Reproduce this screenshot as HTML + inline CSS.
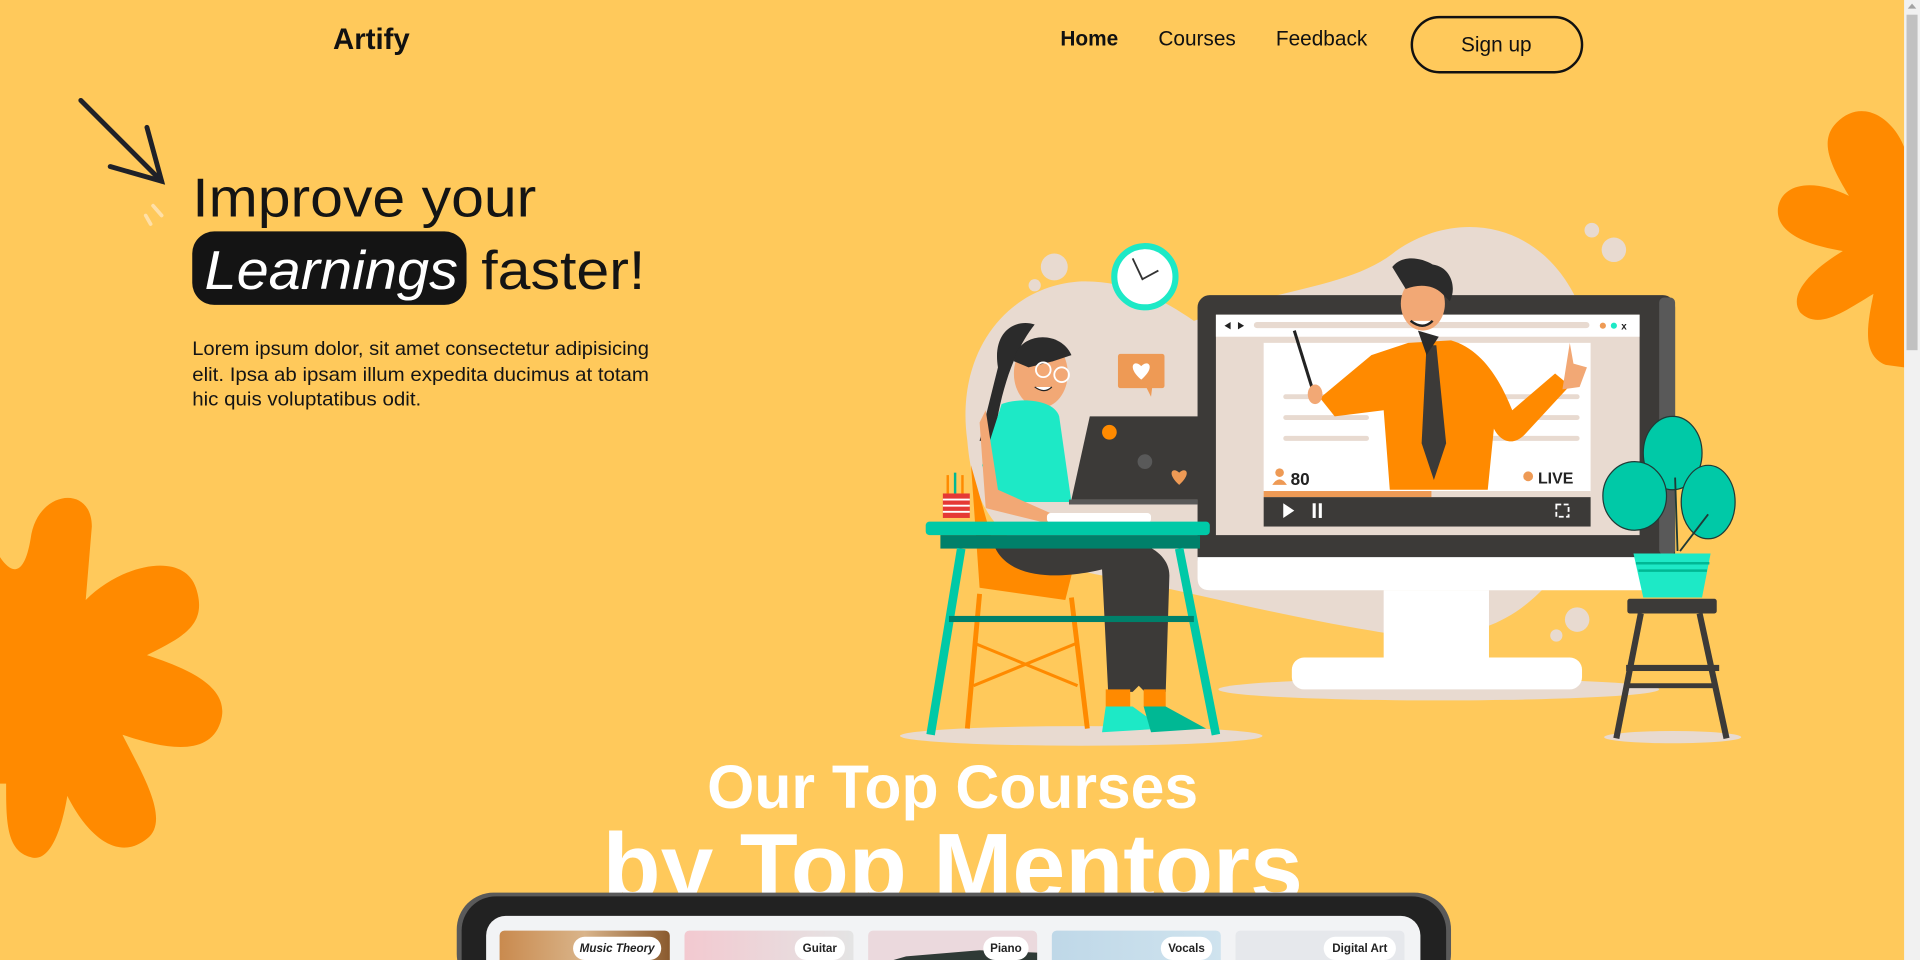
<!DOCTYPE html>
<html><head><meta charset="utf-8"><style>
html,body{margin:0;padding:0;width:1920px;height:960px;overflow:hidden;background:#FFC95B}
svg{display:block}
text{font-family:"Liberation Sans",sans-serif}
</style></head><body>
<svg width="1920" height="960" viewBox="0 0 1568 784" xmlns="http://www.w3.org/2000/svg">
<rect width="1568" height="784" fill="#FFC95B"/>
<!-- orange blobs -->
<path d="M0 455 C10 470 20 470 25 440 C30 400 75 395 75 430 L70 490 C100 460 150 450 160 480 C170 510 150 520 120 535 C150 545 190 560 180 590 C170 620 130 610 100 600 C115 630 140 670 120 685 C95 705 70 680 55 650 C50 680 40 705 25 700 C5 695 5 670 5 640 L0 640 Z" fill="#FF8A00"/>
<path d="M1555 120 C1545 95 1520 80 1500 100 C1485 115 1495 135 1510 160 C1480 145 1455 150 1452 170 C1450 190 1475 200 1505 205 C1480 220 1460 240 1470 255 C1485 270 1505 255 1530 240 C1525 265 1520 290 1540 298 L1555 300 Z" fill="#FF8A00"/>
<!-- arrow -->
<g stroke="#1F2128" stroke-width="4" fill="none" stroke-linecap="round">
<path d="M66 82 L132 148"/><path d="M120 104 L132 148 L90 136"/>
</g>
<g stroke="#FFE0A8" stroke-width="3" stroke-linecap="round"><path d="M125 168 L132 176"/><path d="M119 176 L123 183"/></g>
<!-- nav -->
<text x="272" y="40" font-size="24" font-weight="bold" fill="#111">Artify</text>
<text x="866" y="37" font-size="17" font-weight="bold" fill="#111">Home</text>
<text x="946" y="37" font-size="17" fill="#111">Courses</text>
<text x="1042" y="37" font-size="17" fill="#111">Feedback</text>
<rect x="1153" y="14" width="139" height="45" rx="22.5" fill="none" stroke="#111" stroke-width="2"/>
<text x="1222" y="42" font-size="17" fill="#111" text-anchor="middle">Sign up</text>
<!-- hero -->
<text x="157" y="177" font-size="45" fill="#141414" textLength="281" lengthAdjust="spacingAndGlyphs">Improve your</text>
<rect x="157" y="189" width="224" height="60" rx="18" fill="#141414"/>
<text x="167" y="236" font-size="45" font-style="italic" fill="#fff" textLength="207" lengthAdjust="spacingAndGlyphs">Learnings</text>
<text x="393" y="236" font-size="45" fill="#141414" textLength="134" lengthAdjust="spacingAndGlyphs">faster!</text>
<g font-size="15.5" fill="#141414"><text x="157" y="290" textLength="373" lengthAdjust="spacingAndGlyphs">Lorem ipsum dolor, sit amet consectetur adipisicing</text>
<text x="157" y="311" textLength="373" lengthAdjust="spacingAndGlyphs">elit. Ipsa ab ipsam illum expedita ducimus at totam</text>
<text x="157" y="331" textLength="187" lengthAdjust="spacingAndGlyphs">hic quis voluptatibus odit.</text></g>
<!-- illustration background -->
<path d="M790 360 C780 290 820 235 880 230 C920 228 950 245 975 262 L1010 250 C1060 235 1110 230 1140 205 C1190 170 1260 180 1290 250 C1310 300 1320 380 1290 440 C1250 510 1200 530 1120 515 C1030 500 960 480 900 470 C820 455 795 420 790 360 Z" fill="#E8DAD0"/>
<g fill="#E8DAD0"><circle cx="861" cy="218" r="11"/><circle cx="845" cy="233" r="5"/><circle cx="1300" cy="188" r="6"/><circle cx="1318" cy="204" r="10"/><circle cx="1288" cy="506" r="10"/><circle cx="1271" cy="519" r="5"/>
<ellipse cx="883" cy="601" rx="148" ry="8"/><ellipse cx="1175" cy="563" rx="180" ry="9"/><ellipse cx="1366" cy="602" rx="56" ry="5"/></g>
<!-- clock -->
<circle cx="935" cy="226" r="25" fill="#fff" stroke="#1DE9C6" stroke-width="5"/>
<path d="M925 211 L933 228 L946 221" stroke="#333" stroke-width="1.5" fill="none"/>
<!-- heart bubble -->
<rect x="913" y="289" width="38" height="28" rx="2" fill="#EE9A55"/><path d="M936 316 L940 324 L941 316Z" fill="#EE9A55"/>
<path d="M932 310 C920 300 926 293 932 299 C938 293 944 300 932 310Z" fill="#fff"/>
<!-- monitor -->
<rect x="978" y="241" width="390" height="225" rx="10" fill="#3C3A38"/>
<rect x="1355" y="243" width="13" height="210" rx="4" fill="#595959"/>
<path d="M978 455 H1368 V472 Q1368 482 1358 482 H988 Q978 482 978 472Z" fill="#fff"/>
<rect x="1130" y="482" width="86" height="56" fill="#fff"/>
<rect x="1055" y="537" width="237" height="26" rx="10" fill="#fff"/>
<rect x="993" y="257" width="346" height="180" fill="#E8DAD0"/>
<rect x="993" y="257" width="346" height="18" fill="#fff"/>
<rect x="1024" y="263" width="274" height="5" rx="2.5" fill="#E8DAD0"/>
<path d="M1000 266 l5 -3 v6z M1016 266 l-5 -3 v6z" fill="#222"/>
<circle cx="1309" cy="266" r="2.5" fill="#EE9A55"/><circle cx="1318" cy="266" r="2.5" fill="#1DE9C6"/>
<text x="1324" y="269" font-size="8" font-weight="bold" fill="#222">x</text>
<rect x="1032" y="280" width="267" height="123" fill="#fff"/>
<g fill="#E8DAD0"><rect x="1048" y="322" width="70" height="4" rx="2"/><rect x="1048" y="339" width="70" height="4" rx="2"/><rect x="1048" y="356" width="70" height="4" rx="2"/><rect x="1215" y="322" width="75" height="4" rx="2"/><rect x="1215" y="339" width="75" height="4" rx="2"/><rect x="1215" y="356" width="75" height="4" rx="2"/></g>
<rect x="1032" y="401" width="267" height="5" fill="#E8DAD0"/><rect x="1032" y="401" width="137" height="5" fill="#EE9A55"/>
<rect x="1032" y="406" width="267" height="24" fill="#3C3A38"/>
<path d="M1048 411 l9 6 l-9 6z" fill="#fff"/><rect x="1072" y="411" width="2.5" height="12" fill="#fff"/><rect x="1077" y="411" width="2.5" height="12" fill="#fff"/>
<rect x="1271" y="412" width="10" height="10" fill="none" stroke="#fff" stroke-width="1.5" stroke-dasharray="4 2"/>
<circle cx="1045" cy="386" r="3.5" fill="#EE9A55"/><path d="M1039 396 q6 -9 12 0z" fill="#EE9A55"/>
<text x="1054" y="396" font-size="14" font-weight="bold" fill="#222">80</text>
<circle cx="1248" cy="389" r="4" fill="#EE9A55"/>
<text x="1256" y="395" font-size="13" font-weight="bold" fill="#222">LIVE</text>
<!-- teacher -->
<path d="M1150 280 L1185 278 C1210 285 1225 310 1235 335 L1270 305 L1282 315 L1245 355 C1235 365 1225 360 1220 350 L1215 400 L1135 400 L1130 335 L1090 340 L1078 325 L1120 290Z" fill="#FF8A00"/>
<path d="M1165 282 l8 0 l8 80 l-10 30 l-10 -30z" fill="#3C3A38"/>
<path d="M1057 270 L1075 328" stroke="#222" stroke-width="2.5"/>
<ellipse cx="1074" cy="322" rx="6" ry="8" fill="#F2A875"/>
<path d="M1282 280 L1285 297 L1296 300 L1290 316 L1276 318 Z" fill="#F2A875"/>
<ellipse cx="1162" cy="248" rx="18" ry="22" fill="#F2A875"/>
<path d="M1137 218 C1145 208 1160 210 1170 216 C1185 218 1190 235 1184 246 L1178 240 C1170 232 1158 232 1148 236 Z" fill="#2B2B2B"/>
<path d="M1152 262 q10 8 18 0" stroke="#222" stroke-width="2" fill="#fff"/>
<path d="M1158 270 L1175 275 L1165 290Z" fill="#2B2B2B"/>
<!-- woman -->
<path d="M815 300 C810 270 830 260 845 265 C825 290 815 330 812 360 L800 360Z" fill="#2B2B2B"/>
<ellipse cx="850" cy="305" rx="22" ry="28" fill="#F2A875"/>
<path d="M828 295 C830 272 865 268 875 290 L860 295 L840 300Z" fill="#2B2B2B"/>
<circle cx="852" cy="302" r="6" fill="none" stroke="#fff" stroke-width="1.5"/><circle cx="867" cy="306" r="6" fill="none" stroke="#fff" stroke-width="1.5"/>
<path d="M845 316 q8 6 14 0" fill="#fff" stroke="#222" stroke-width="1"/>
<path d="M818 330 C830 325 860 325 865 340 L875 410 L815 410 L802 380 Z" fill="#1DE9C6"/>
<path d="M805 335 L815 400 L860 420 L858 428 L805 415 L800 345Z" fill="#F2A875"/>
<!-- chair -->
<path d="M793 380 L800 480 L870 490 L880 450 L810 440Z" fill="#FF8A00"/>
<g stroke="#FF8A00" stroke-width="4"><path d="M800 485 L790 595"/><path d="M875 488 L888 595"/><path d="M795 525 L880 560 M880 525 L795 560" stroke-width="2.5"/></g>
<!-- legs -->
<path d="M810 440 C820 480 880 470 900 465 L905 565 L925 565 L930 560 L935 565 L952 565 L955 470 C955 450 930 440 910 440Z" fill="#3C3A38"/>
<rect x="903" y="563" width="20" height="14" fill="#FF8A00"/><rect x="934" y="563" width="18" height="14" fill="#FF8A00"/>
<path d="M903 577 L925 577 L950 595 L900 598Z" fill="#1DE9C6"/><path d="M934 577 L952 577 L985 595 L940 598Z" fill="#00B894"/>
<!-- laptop -->
<path d="M890 340 L980 340 L980 408 L875 408Z" fill="#3C3A38"/>
<circle cx="906" cy="353" r="6" fill="#FF8A00"/><circle cx="935" cy="377" r="6" fill="#595959"/>
<path d="M963 396 C952 386 958 381 963 386 C968 381 974 386 963 396Z" fill="#EE9A55"/>
<rect x="873" y="408" width="105" height="4" fill="#595959"/>
<rect x="855" y="419" width="85" height="8" rx="3" fill="#fff"/>
<!-- pencil cup -->
<rect x="770" y="403" width="22" height="20" fill="#E53935"/><g stroke="#fff" stroke-width="1.5"><path d="M770 408h22M770 413h22M770 418h22"/></g>
<g stroke-width="2"><path d="M774 403 L774 388" stroke="#FF8A00"/><path d="M780 403 L780 386" stroke="#00B894"/><path d="M786 403 L786 388" stroke="#FF8A00"/></g>
<!-- desk -->
<rect x="756" y="426" width="232" height="11" rx="3" fill="#00C9A7"/>
<rect x="768" y="437" width="212" height="11" fill="#00806A"/>
<g stroke="#00C9A7" stroke-width="7"><path d="M785 448 L760 600"/><path d="M963 448 L993 600"/></g>
<rect x="775" y="503" width="200" height="5" fill="#00806A"/>
<!-- plant & stool -->
<g fill="#00C9A7" stroke="#1F3A36" stroke-width="1"><ellipse cx="1366" cy="370" rx="24" ry="30"/><ellipse cx="1335" cy="405" rx="26" ry="28"/><ellipse cx="1395" cy="410" rx="22" ry="30"/></g>
<path d="M1370 450 L1368 390 M1372 450 L1395 420" stroke="#1F3A36" stroke-width="1.5" fill="none"/>
<path d="M1334 452 L1397 452 L1390 488 L1342 488Z" fill="#1DE9C6"/>
<g stroke="#00B894" stroke-width="2"><path d="M1336 460h60M1338 466h56"/></g>
<rect x="1329" y="489" width="73" height="12" rx="2" fill="#3C3A38"/>
<g stroke="#3C3A38" stroke-width="5"><path d="M1340 501 L1320 603"/><path d="M1388 501 L1410 603"/></g>
<rect x="1328" y="543" width="76" height="5" fill="#3C3A38"/><rect x="1330" y="558" width="72" height="4" fill="#3C3A38"/>
<!-- section heading -->
<text x="778" y="660" font-size="50" font-weight="bold" fill="#fff" text-anchor="middle" textLength="401" lengthAdjust="spacingAndGlyphs">Our Top Courses</text>
<text x="778" y="735" font-size="78" font-weight="bold" fill="#fff" text-anchor="middle" textLength="572" lengthAdjust="spacingAndGlyphs">by Top Mentors</text>
<!-- tablet -->
<rect x="373" y="729" width="812" height="80" rx="30" fill="#5A5A5A"/>
<rect x="377" y="732" width="804" height="80" rx="28" fill="#222"/>
<rect x="397" y="748" width="763" height="60" rx="16" fill="#F2F3F5"/>
<defs>
<linearGradient id="g1" x1="0" x2="1"><stop offset="0" stop-color="#C98A4E"/><stop offset="0.5" stop-color="#D9B48A"/><stop offset="1" stop-color="#8A5A2E"/></linearGradient>
<linearGradient id="g2" x1="0" x2="1"><stop offset="0" stop-color="#F3C9D0"/><stop offset="1" stop-color="#E4E4E4"/></linearGradient>
<linearGradient id="g4" x1="0" x2="1"><stop offset="0" stop-color="#BFD8E8"/><stop offset="1" stop-color="#CFE3EE"/></linearGradient>
</defs>
<rect x="408" y="760" width="139" height="30" rx="4" fill="url(#g1)"/>
<rect x="559" y="760" width="138" height="30" rx="4" fill="url(#g2)"/>
<rect x="709" y="760" width="138" height="30" rx="4" fill="#EBD9DD"/><path d="M709 790 L740 781 L800 776 L847 778 L847 790Z" fill="#2F3A36"/>
<rect x="859" y="760" width="138" height="30" rx="4" fill="url(#g4)"/>
<rect x="1009" y="760" width="138" height="30" rx="4" fill="#E6E8EC"/>
<g fill="#fff"><rect x="468" y="765" width="72" height="19" rx="9.5"/><rect x="649" y="765" width="41" height="19" rx="9.5"/><rect x="803" y="765" width="37" height="19" rx="9.5"/><rect x="948" y="765" width="42" height="19" rx="9.5"/><rect x="1081" y="765" width="59" height="19" rx="9.5"/></g>
<g font-size="9.5" font-weight="bold" fill="#222" text-anchor="middle"><text x="504" y="777.5" font-style="italic">Music Theory</text><text x="669.5" y="777.5">Guitar</text><text x="821.5" y="777.5">Piano</text><text x="969" y="777.5">Vocals</text><text x="1110.5" y="777.5">Digital Art</text></g>
<!-- scrollbar -->
<rect x="1555" y="0" width="13" height="784" fill="#F1F1F1"/>
<rect x="1557" y="12" width="9" height="274" fill="#C1C1C1"/>
<path d="M1558 7 l3.5 -4 l3.5 4z" fill="#A3A3A3"/>
</svg>
</body></html>
